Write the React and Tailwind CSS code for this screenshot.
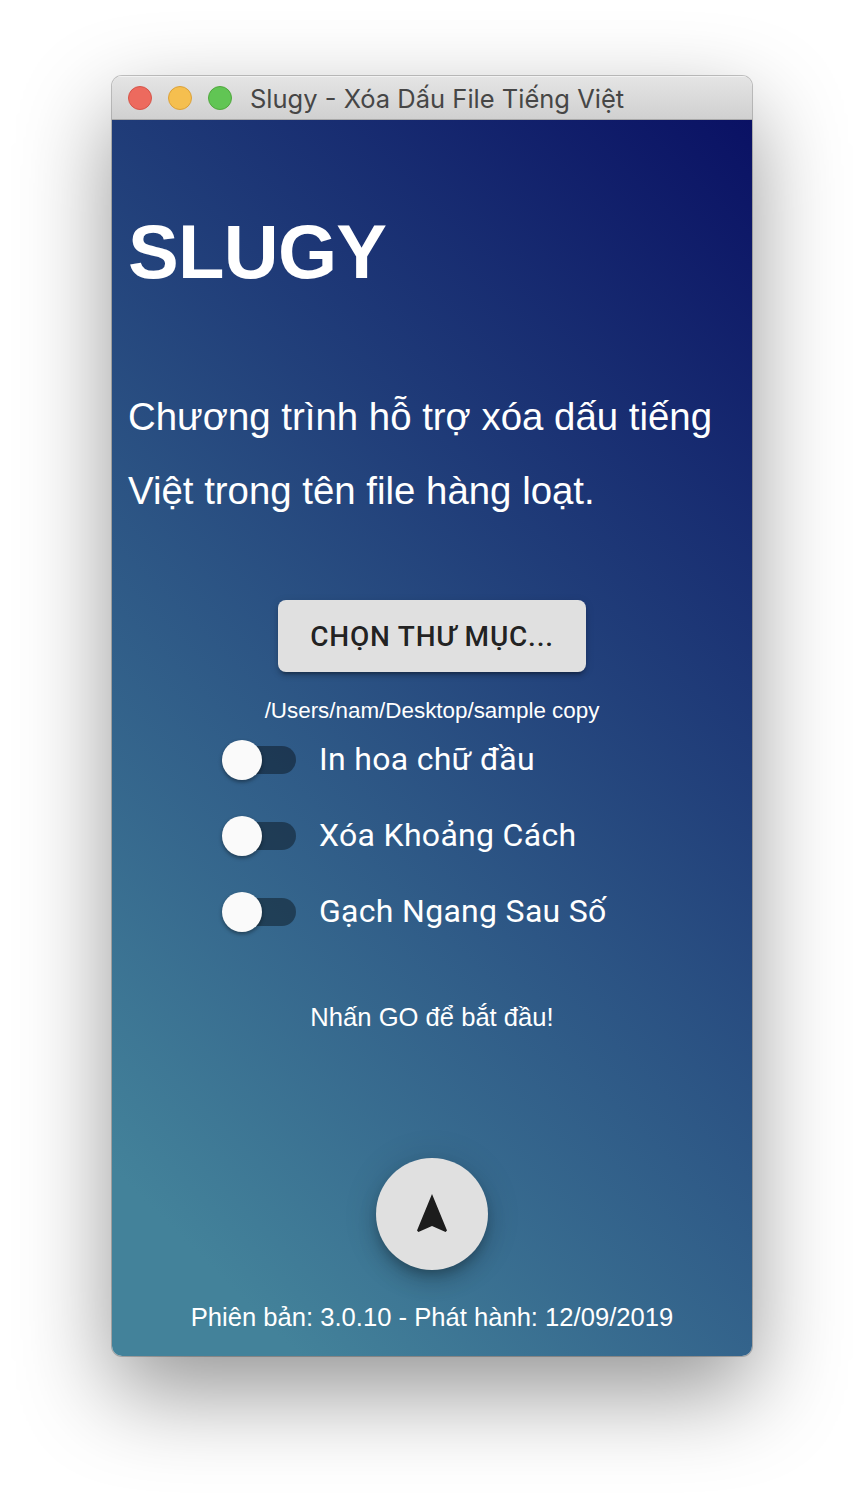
import React from "react";

const options = ["In hoa chữ đầu", "Xóa Khoảng Cách", "Gạch Ngang Sau Số"];

function Toggle({ label }) {
  return (
    <label className="flex h-[76px] items-center">
      <span className="relative h-7 w-[68px] shrink-0 ml-[6px] rounded-full bg-black/38">
        <span className="absolute -left-[6px] -top-[6px] size-10 rounded-full bg-[#fafafa] shadow-[0_2px_4px_rgba(0,0,0,0.3),0_2px_3px_rgba(0,0,0,0.1)]" />
      </span>
      <span className="ml-[23px] whitespace-nowrap pb-[2px] font-[Roboto] text-[32px] leading-[48px] tracking-[0.3px]">{label}</span>
    </label>
  );
}

export default function App() {
  return (
    <div className="flex h-[1504px] w-[864px] bg-white pl-28 pt-19 font-['Liberation_Sans',sans-serif]">
      <div className="flex h-[1280px] w-[640px] flex-col overflow-hidden rounded-[10px] shadow-[0_0_0_1px_rgba(0,0,0,0.22),0_36px_92px_rgba(0,0,0,0.42)]">
        <header className="flex h-11 shrink-0 items-center gap-4 border-b border-[#a8a8a8] bg-linear-to-b from-[#e5e5e5] to-[#d0d0d0] pl-4 shadow-[inset_0_1px_0_#f2f2f2]">
          <span className="size-6 rounded-full border border-[#d5554a] bg-[#ed6a5e]" />
          <span className="size-6 rounded-full border border-[#dba13a] bg-[#f5bf4f]" />
          <span className="size-6 rounded-full border border-[#51a73e] bg-[#61c554]" />
          <span className="ml-0.5 whitespace-nowrap pt-[3px] font-[Inter,sans-serif] text-[25.5px] text-[#464646]">Slugy - Xóa Dấu File Tiếng Việt</span>
        </header>
        <main className="flex flex-1 flex-col items-center bg-[linear-gradient(45deg,#43829a_10%,#0a1164_100%)] text-white">
          <h1 className="mt-[84px] self-start pl-4 text-[76px] font-bold leading-[96px] tracking-[-0.7px]">SLUGY</h1>
          <p className="mt-[80px] w-full whitespace-nowrap pl-4 text-[38.4px] leading-[74px]">Chương trình hỗ trợ xóa dấu tiếng<br />Việt trong tên file hàng loạt.</p>
          <button className="mt-[72px] h-[72px] w-[308px] shrink-0 rounded-lg bg-[#e0e0e0] pt-[2px] font-[Roboto] text-[28px] font-medium tracking-[0.8px] text-black/87 shadow-[0_6px_2px_-4px_rgba(0,0,0,0.2),0_4px_4px_rgba(0,0,0,0.14),0_2px_10px_rgba(0,0,0,0.12)]">CHỌN THƯ MỤC...</button>
          <p className="mt-[25px] text-[22.4px] leading-[28px]">/Users/nam/Desktop/sample copy</p>
          <div className="-mt-[3px] w-[420px]">
            {options.map((label) => <Toggle key={label} label={label} />)}
          </div>
          <p className="mt-[51px] text-[25.6px] leading-[32px]">Nhấn GO để bắt đầu!</p>
          <button aria-label="GO" className="mt-[125px] flex size-28 shrink-0 items-center justify-center rounded-full bg-[#e0e0e0] shadow-[0_6px_10px_-2px_rgba(0,0,0,0.2),0_12px_20px_rgba(0,0,0,0.14),0_2px_36px_rgba(0,0,0,0.12)]">
            <svg viewBox="0 0 24 24" className="size-12" fill="#1c1c1c"><path d="M12 2 4.5 20.29l.71.71L12 18l6.79 3 .71-.71z" /></svg>
          </button>
          <p className="mt-[31px] text-[25.6px] leading-[32px]">Phiên bản: 3.0.10 - Phát hành: 12/09/2019</p>
        </main>
      </div>
    </div>
  );
}
